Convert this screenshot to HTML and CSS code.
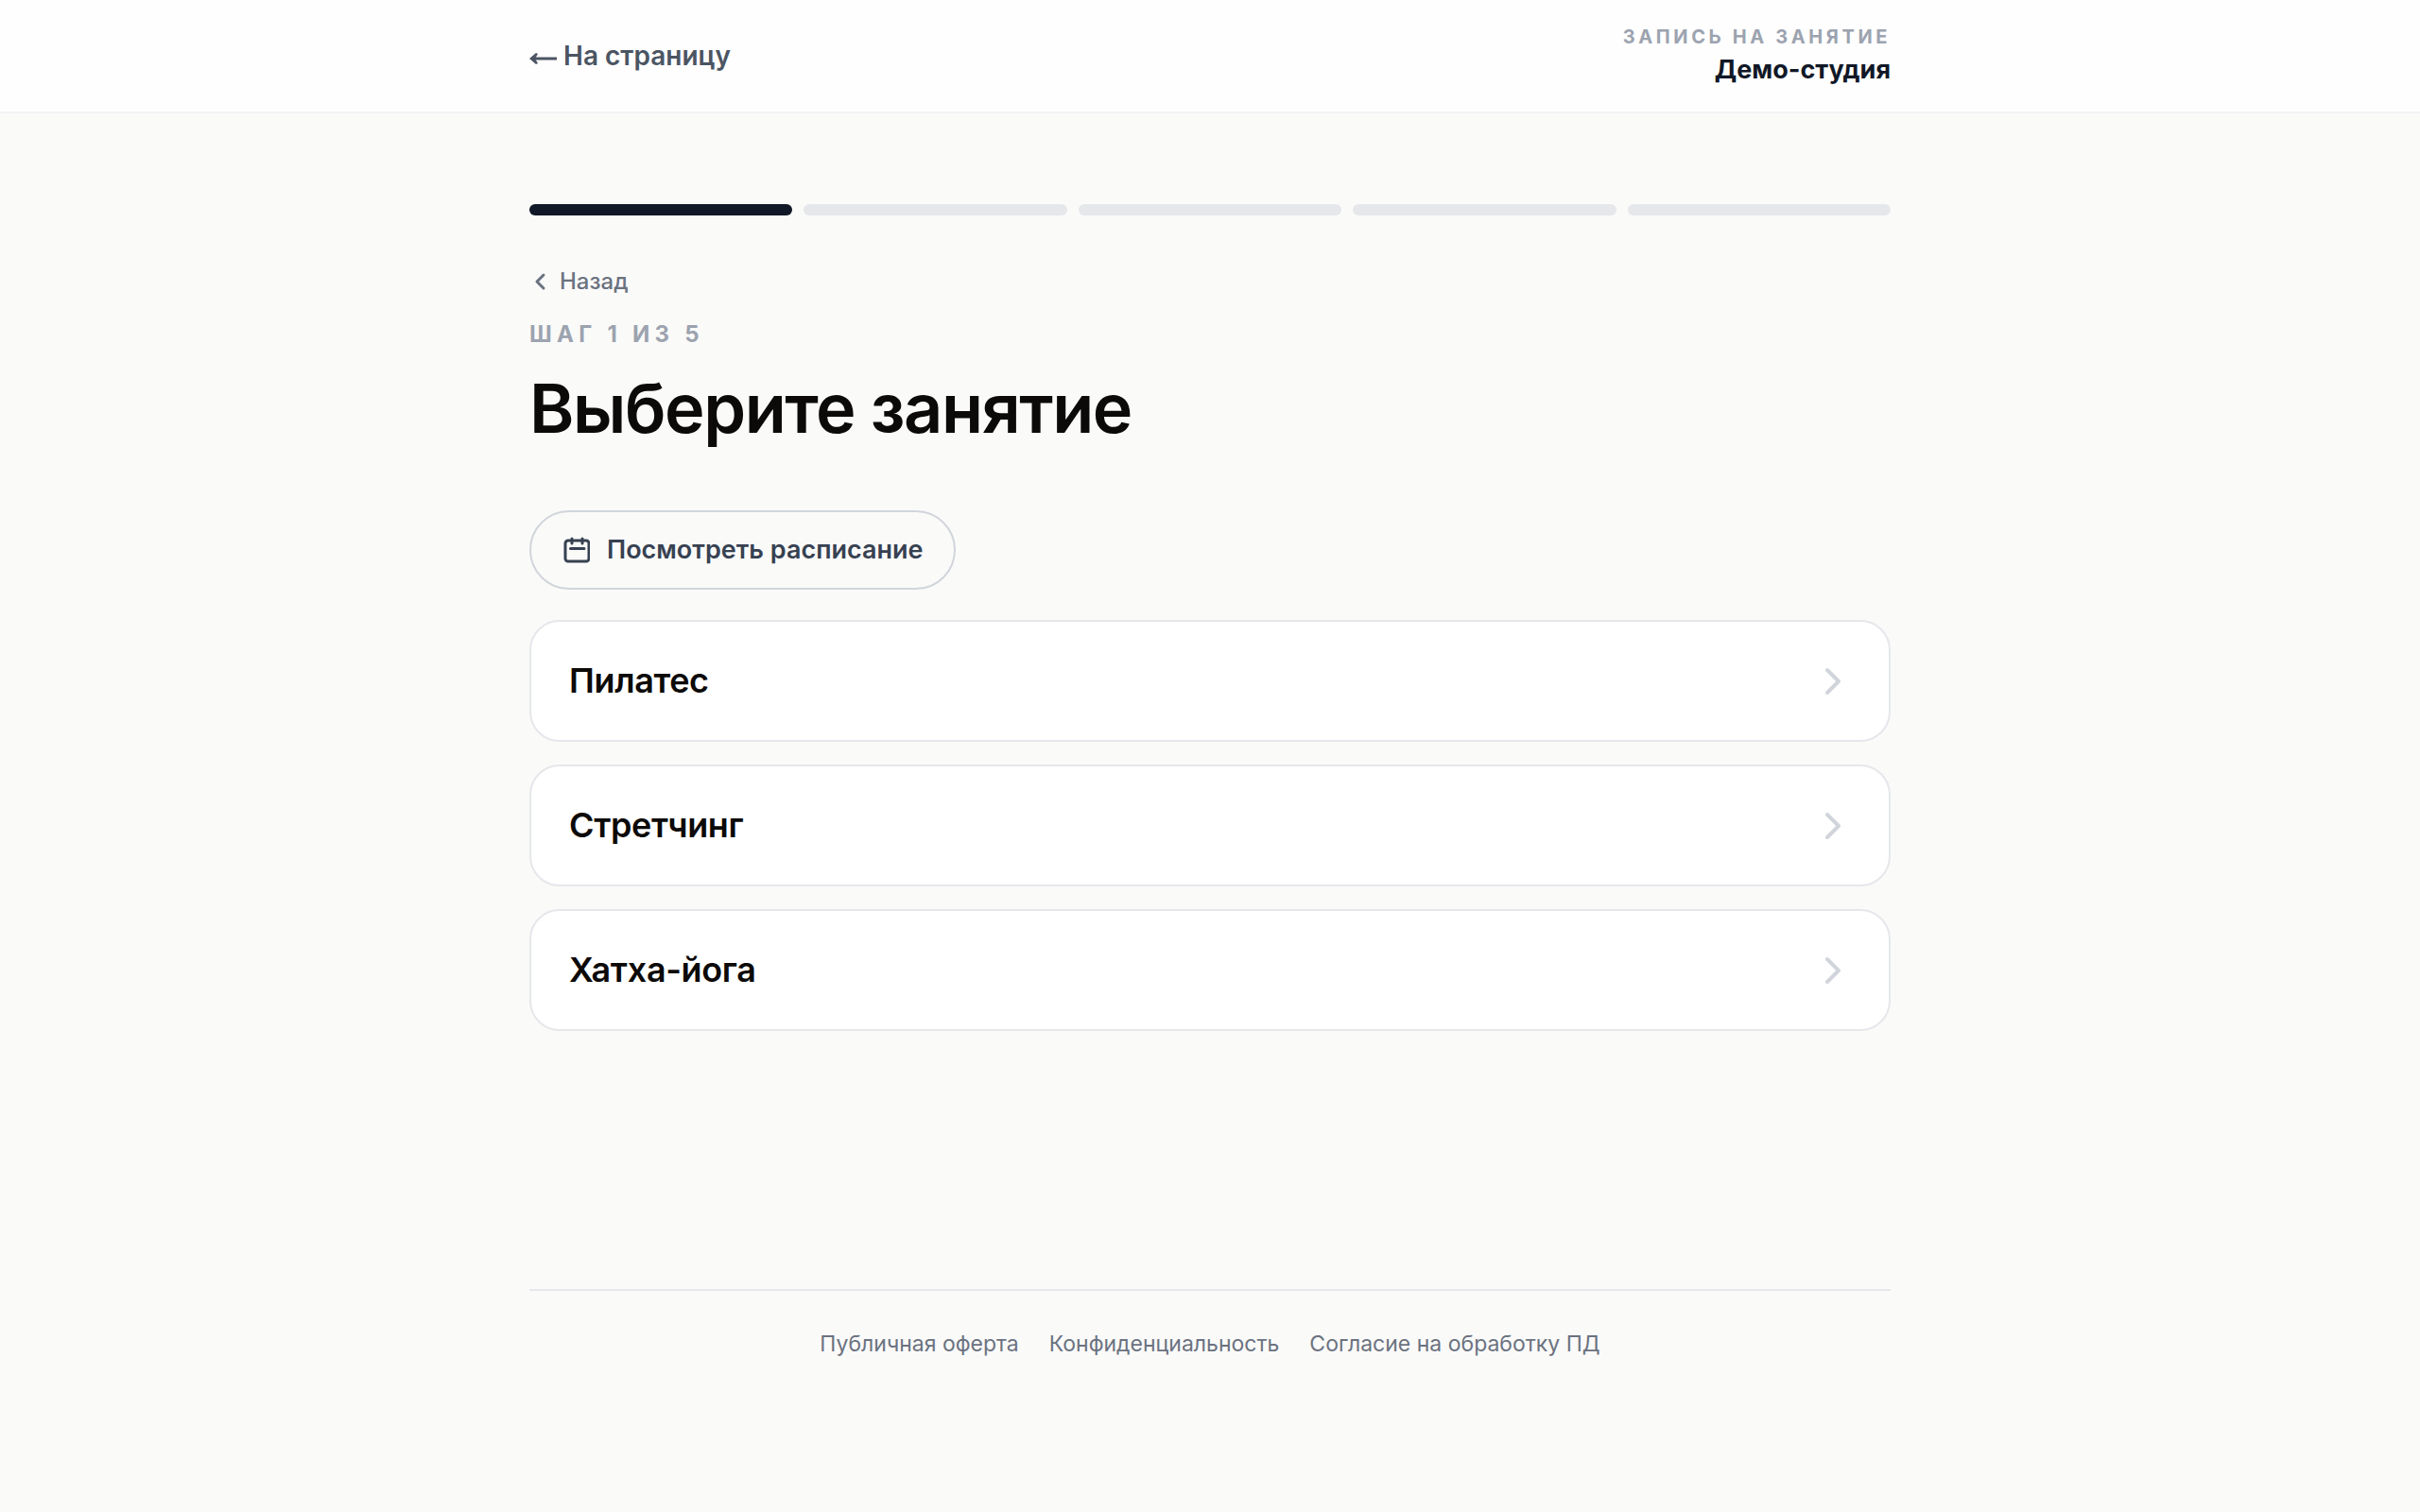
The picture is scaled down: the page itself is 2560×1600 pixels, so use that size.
FILE: index.html
```
<!DOCTYPE html>
<html lang="ru">
<head>
    <meta charset="UTF-8">
    <meta name="viewport" content="width=device-width, initial-scale=1.0">
    <title>Запись на занятие</title>
    <link rel="stylesheet" href="styles.css">
</head>
<body>

<header class="header">
    <div class="container header-inner">
        <a href="#" class="header-link">
            <svg class="icon-arrow" viewBox="0 0 30 28" aria-hidden="true">
                <path d="M3 17h26" />
                <path class="head" d="M0 17l7-6 2 1-3 5 3 5-2 1z" />
            </svg>
            На страницу
        </a>
        <div class="studio">
            <p class="studio-label">Запись на занятие</p>
            <p class="studio-name">Демо-студия</p>
        </div>
    </div>
</header>

<main class="container main">
    <div class="progress">
        <span class="progress-step active"></span>
        <span class="progress-step"></span>
        <span class="progress-step"></span>
        <span class="progress-step"></span>
        <span class="progress-step"></span>
    </div>

    <button type="button" class="back">
        <svg class="icon-back" viewBox="0 0 24 24" aria-hidden="true"><path d="M15 5l-7 7 7 7" /></svg>
        Назад
    </button>

    <p class="step">Шаг 1 из 5</p>
    <h1>Выберите занятие</h1>

    <button type="button" class="schedule">
        <svg class="icon-calendar" viewBox="0 0 28 28" aria-hidden="true">
            <rect x="2" y="4" width="25" height="22" rx="3" />
            <path d="M9 2v5M20 2v5M7.500 12.500h14.500" />
        </svg>
        Посмотреть расписание
    </button>

    <div class="lessons">
        <button type="button" class="lesson">
            Пилатес
            <svg class="icon-next" viewBox="0 0 40 40" aria-hidden="true"><path d="M15 8l12 12-12 12" /></svg>
        </button>
        <button type="button" class="lesson">
            Стретчинг
            <svg class="icon-next" viewBox="0 0 40 40" aria-hidden="true"><path d="M15 8l12 12-12 12" /></svg>
        </button>
        <button type="button" class="lesson">
            Хатха-йога
            <svg class="icon-next" viewBox="0 0 40 40" aria-hidden="true"><path d="M15 8l12 12-12 12" /></svg>
        </button>
    </div>
</main>

<footer class="container">
    <nav class="footer">
        <a href="#">Публичная оферта</a>
        <a href="#">Конфиденциальность</a>
        <a href="#">Согласие на обработку ПД</a>
    </nav>
</footer>

</body>
</html>
```
FILE: styles.css
```
* {
    box-sizing: border-box;
}

body {
    margin: 0;
    background-color: #fafaf9;
    color: #0c0a09;
    font-family: Inter, "Liberation Sans", sans-serif;
}

p, h1 {
    margin: 0;
}

a {
    color: inherit;
    text-decoration: none;
}

button {
    font-family: inherit;
    color: inherit;
    cursor: pointer;
}

svg {
    flex-shrink: 0;
    fill: none;
    stroke: currentColor;
    stroke-linecap: round;
    stroke-linejoin: round;
}

.container {
    width: 100%;
    max-width: 1520px;
    margin: 0 auto;
    padding: 0 40px;
}

/* Header */
.header {
    background-color: #fefefe;
    border-bottom: 2px solid #f0f1f3;
}

.header-inner {
    display: flex;
    align-items: center;
    justify-content: space-between;
    padding-top: 24px;
    padding-bottom: 24px;
}

.header-link {
    display: flex;
    align-items: center;
    gap: 6px;
    font-size: 28px;
    line-height: 40px;
    font-weight: 600;
    color: #4b5563;
}

.icon-arrow {
    width: 30px;
    height: 28px;
    stroke-width: 3;
    stroke-linecap: butt;
}

.icon-arrow .head {
    fill: currentColor;
    stroke: none;
}

.studio {
    text-align: right;
}

.studio-label {
    font-size: 20px;
    line-height: 30px;
    font-weight: 700;
    letter-spacing: 0.18em;
    text-transform: uppercase;
    color: #9ca3af;
}

.studio-name {
    font-size: 27px;
    line-height: 40px;
    font-weight: 700;
    color: #111827;
}

/* Progress bar */
.main {
    padding-top: 96px;
}

.progress {
    display: flex;
    gap: 12px;
    margin-bottom: 52px;
}

.progress-step {
    flex: 1;
    height: 12px;
    border-radius: 6px;
    background-color: #e5e7eb;
}

.progress-step.active {
    background-color: #111827;
}

/* Step title */
.back {
    display: flex;
    align-items: center;
    gap: 8px;
    padding: 0;
    border: none;
    background: none;
    font-size: 24px;
    line-height: 36px;
    font-weight: 500;
    color: #6b7280;
}

.icon-back {
    width: 24px;
    height: 24px;
    stroke-width: 3;
}

.step {
    margin-top: 20px;
    font-size: 24px;
    line-height: 36px;
    font-weight: 700;
    letter-spacing: 0.22em;
    text-transform: uppercase;
    color: #9ca3af;
}

h1 {
    margin-top: 20px;
    font-size: 72px;
    line-height: 80px;
    font-weight: 600;
    letter-spacing: -0.02em;
}

/* Schedule button */
.schedule {
    display: flex;
    align-items: center;
    gap: 18px;
    margin-top: 68px;
    padding: 20px 32px 20px 34px;
    border: 2px solid #d1d5db;
    border-radius: 42px;
    background: none;
    font-size: 27px;
    line-height: 40px;
    font-weight: 600;
    color: #374151;
}

.icon-calendar {
    width: 28px;
    height: 28px;
    stroke-width: 3;
}

/* Lessons */
.lessons {
    display: flex;
    flex-direction: column;
    gap: 24px;
    margin-top: 32px;
}

.lesson {
    display: flex;
    align-items: center;
    justify-content: space-between;
    padding: 40px;
    border: 2px solid #e5e7eb;
    border-radius: 32px;
    background-color: #fff;
    font-size: 36px;
    line-height: 45px;
    font-weight: 600;
    letter-spacing: -0.01em;
    text-align: left;
}

.icon-next {
    width: 40px;
    height: 40px;
    stroke-width: 4;
    color: #d1d5db;
}

/* Footer */
.footer {
    display: flex;
    flex-wrap: wrap;
    justify-content: center;
    gap: 32px;
    margin-top: 273px;
    padding: 40px 0;
    border-top: 2px solid #e5e7eb;
    font-size: 23px;
    line-height: 32px;
    color: #6b7280;
}
```
